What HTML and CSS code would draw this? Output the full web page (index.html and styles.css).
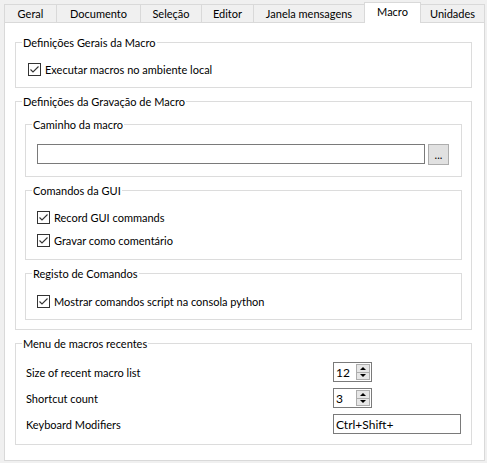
FILE: index.html
```html
<!DOCTYPE html>
<html lang="pt">
<head>
<meta charset="utf-8">
<title>Macro</title>
<link rel="stylesheet" href="styles.css">
</head>
<body>
<div class="tabs">
  <div class="tab t-geral">Geral</div>
  <div class="tab t-doc">Documento</div>
  <div class="tab t-sel">Seleção</div>
  <div class="tab t-ed">Editor</div>
  <div class="tab t-jan">Janela mensagens</div>
  <div class="tab t-mac active">Macro</div>
  <div class="tab t-uni">Unidades</div>
</div>
<div class="pane">
  <fieldset class="group g1">
    <legend>Definições Gerais da Macro</legend>
    <div class="check-row">
      <span class="cb"><svg width="13" height="13" viewBox="0 0 13 13"><rect x="0.5" y="0.5" width="12" height="12" fill="#fff" stroke="#333"/><polyline points="2.5,6.5 5,9 10.5,3.5" fill="none" stroke="#333" stroke-width="1.1"/></svg></span>
      <span>Executar macros no ambiente local</span>
    </div>
  </fieldset>

  <fieldset class="group g2">
    <legend>Definições da Gravação de Macro</legend>
    <fieldset class="group sub path">
      <legend>Caminho da macro</legend>
      <div class="path-row">
        <div class="line-edit"></div>
        <button class="dots" type="button">...</button>
      </div>
    </fieldset>
    <fieldset class="group sub gui">
      <legend>Comandos da GUI</legend>
      <div class="check-row tall">
        <span class="cb"><svg width="13" height="13" viewBox="0 0 13 13"><rect x="0.5" y="0.5" width="12" height="12" fill="#fff" stroke="#333"/><polyline points="2.5,6.5 5,9 10.5,3.5" fill="none" stroke="#333" stroke-width="1.1"/></svg></span>
        <span>Record GUI commands</span>
      </div>
      <div class="check-row tall">
        <span class="cb"><svg width="13" height="13" viewBox="0 0 13 13"><rect x="0.5" y="0.5" width="12" height="12" fill="#fff" stroke="#333"/><polyline points="2.5,6.5 5,9 10.5,3.5" fill="none" stroke="#333" stroke-width="1.1"/></svg></span>
        <span>Gravar como comentário</span>
      </div>
    </fieldset>
    <fieldset class="group sub reg">
      <legend>Registo de Comandos</legend>
      <div class="check-row tall">
        <span class="cb"><svg width="13" height="13" viewBox="0 0 13 13"><rect x="0.5" y="0.5" width="12" height="12" fill="#fff" stroke="#333"/><polyline points="2.5,6.5 5,9 10.5,3.5" fill="none" stroke="#333" stroke-width="1.1"/></svg></span>
        <span>Mostrar comandos script na consola python</span>
      </div>
    </fieldset>
  </fieldset>

  <fieldset class="group g3">
    <legend>Menu de macros recentes</legend>
    <div class="form-row">
      <span class="label">Size of recent macro list</span>
      <div class="spin"><span class="val">12</span><span class="spin-btns"><span class="sb up"></span><span class="sb down"></span></span></div>
    </div>
    <div class="form-row">
      <span class="label">Shortcut count</span>
      <div class="spin"><span class="val">3</span><span class="spin-btns"><span class="sb up"></span><span class="sb down"></span></span></div>
    </div>
    <div class="form-row">
      <span class="label">Keyboard Modifiers</span>
      <div class="text-edit">Ctrl+Shift+</div>
    </div>
  </fieldset>
</div>
</body>
</html>
```

FILE: styles.css
```css
* { box-sizing: border-box; }
html, body { margin: 0; padding: 0; }
body {
  width: 487px;
  height: 463px;
  background: #f0f0f0;
  font-family: Lato, "Liberation Sans", Arial, sans-serif;
  font-size: 11px;
  color: #000;
  overflow: hidden;
}

.tabs {
  display: flex;
  align-items: flex-end;
  height: 22px;
  padding-left: 4px;
}
.tab {
  height: 18px;
  margin-left: -1px;
  border: 1px solid #d9d9d9;
  border-bottom: none;
  background: #f0f0f0;
  display: flex;
  align-items: center;
  justify-content: center;
  padding-bottom: 1px;
  white-space: nowrap;
}
.tab:first-child { margin-left: 0; }
.t-geral { width: 53px; }
.t-doc { width: 85px; }
.t-sel { width: 62px; }
.t-ed { width: 53px; }
.t-jan { width: 112px; }
.t-mac { width: 57px; }
.t-uni { width: 65px; }
.tab.active {
  position: relative;
  z-index: 2;
  height: 21px;
  margin-bottom: -1px;
  background: #fff;
  padding-bottom: 3px;
}

.pane {
  margin-left: 4px;
  width: 481px;
  height: 439px;
  background: #fff;
  border: 1px solid #d9d9d9;
  padding: 0 12px 0 10px;
}

.group {
  margin: 0;
  border: 1px solid #dcdcdc;
  padding: 0;
  min-width: 0;
}
.group > legend {
  padding: 0 1px;
  line-height: 15px;
  height: 15px;
}

.g1 { margin-top: 12px; padding: 11px 10px 10px 12px; }
.g1 > legend { margin-left: -6px; }
.g2 { margin-top: 6px; padding: 8px 9px 9px 9px; }
.g2 > legend { margin-left: -3px; }
.sub { padding-left: 11px; padding-right: 12px; }
.sub > legend { margin-left: -5px; }
.path { margin-top: 0; padding-top: 12px; padding-bottom: 11px; }
.gui { margin-top: 6px; padding-top: 8px; padding-bottom: 7px; }
.reg { margin-top: 6px; padding-top: 9px; padding-bottom: 6px; }
.g3 { margin-top: 6px; padding: 11px 10px 10px 10px; }
.g3 > legend { margin-left: -4px; }

.check-row {
  display: flex;
  align-items: center;
  gap: 4px;
  height: 16px;
}
.check-row.tall { height: 23px; }
.cb { display: flex; width: 13px; height: 13px; }

.path-row { display: flex; gap: 3px; align-items: flex-start; }
.line-edit {
  flex: 1;
  height: 20px;
  border: 1px solid #7a7a7a;
  background: #fff;
}
.dots {
  width: 21px;
  height: 21px;
  margin: 0;
  padding: 0 0 4px 0;
  border: 1px solid #adadad;
  background: #e1e1e1;
  font-family: Lato, "Liberation Sans", Arial, sans-serif;
  font-size: 11px;
  color: #000;
  display: flex;
  align-items: flex-end;
  justify-content: center;
  line-height: 10px;
}

.form-row {
  display: flex;
  align-items: center;
  justify-content: space-between;
  height: 20px;
}
.form-row + .form-row { margin-top: 6px; }
.label { padding-top: 1px; }

.spin {
  width: 39px;
  height: 20px;
  border: 1px solid #7a7a7a;
  display: flex;
  align-items: center;
  justify-content: space-between;
  padding: 0 1px 0 2px;
  margin-right: 89px;
  font-size: 12px;
}
.spin-btns {
  display: flex;
  flex-direction: column;
  width: 14px;
  height: 16px;
  border: 1px solid #adadad;
  background: #e6e6e6;
}
.sb {
  flex: 1;
  display: flex;
  align-items: center;
  justify-content: center;
}
.sb.up { border-bottom: 1px solid #adadad; }
.sb.up::before {
  content: "";
  border-left: 3px solid transparent;
  border-right: 3px solid transparent;
  border-bottom: 3px solid #000;
}
.sb.down::before {
  content: "";
  border-left: 3px solid transparent;
  border-right: 3px solid transparent;
  border-top: 3px solid #000;
}

.text-edit {
  width: 128px;
  height: 20px;
  border: 1px solid #7a7a7a;
  padding: 0 2px;
  display: flex;
  align-items: center;
  font-size: 12px;
}
```
